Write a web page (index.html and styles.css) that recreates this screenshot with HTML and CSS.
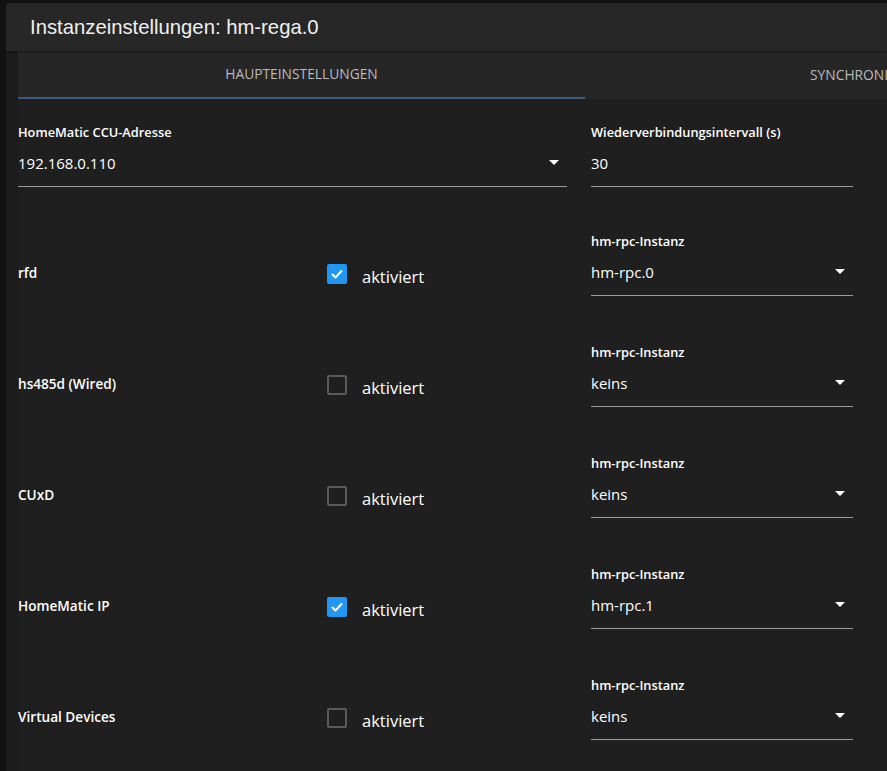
FILE: index.html
```html
<!DOCTYPE html>
<html lang="de">
<head>
<meta charset="utf-8">
<title>Instanzeinstellungen</title>
<link rel="stylesheet" href="styles.css">
</head>
<body>
<div class="dialog">
  <header class="dlg-head">Instanzeinstellungen: hm-rega.0</header>
  <div class="dlg-body">
    <nav class="tabs">
      <div class="tab active">HAUPTEINSTELLUNGEN</div>
      <div class="tab second">SYNCHRONISATION</div>
    </nav>
    <div class="content">
      <div class="row first">
        <div class="field wide">
          <div class="flabel">HomeMatic CCU-Adresse</div>
          <div class="finput"><span>192.168.0.110</span><svg class="arrow" viewBox="0 0 10 5"><path d="M0 0h10L5 5z"/></svg></div>
        </div>
        <div class="field">
          <div class="flabel">Wiederverbindungsintervall (s)</div>
          <div class="finput"><span>30</span></div>
        </div>
      </div>

      <div class="row">
        <div class="name">rfd</div>
        <label class="check"><span class="box on"><svg viewBox="0 0 20 20"><path d="M5.5 10.5l3 3L14.5 7"/></svg></span><span class="ctext">aktiviert</span></label>
        <div class="field">
          <div class="flabel">hm-rpc-Instanz</div>
          <div class="finput"><span>hm-rpc.0</span><svg class="arrow" viewBox="0 0 10 5"><path d="M0 0h10L5 5z"/></svg></div>
        </div>
      </div>

      <div class="row">
        <div class="name">hs485d (Wired)</div>
        <label class="check"><span class="box"></span><span class="ctext">aktiviert</span></label>
        <div class="field">
          <div class="flabel">hm-rpc-Instanz</div>
          <div class="finput"><span>keins</span><svg class="arrow" viewBox="0 0 10 5"><path d="M0 0h10L5 5z"/></svg></div>
        </div>
      </div>

      <div class="row">
        <div class="name">CUxD</div>
        <label class="check"><span class="box"></span><span class="ctext">aktiviert</span></label>
        <div class="field">
          <div class="flabel">hm-rpc-Instanz</div>
          <div class="finput"><span>keins</span><svg class="arrow" viewBox="0 0 10 5"><path d="M0 0h10L5 5z"/></svg></div>
        </div>
      </div>

      <div class="row">
        <div class="name">HomeMatic IP</div>
        <label class="check"><span class="box on"><svg viewBox="0 0 20 20"><path d="M5.5 10.5l3 3L14.5 7"/></svg></span><span class="ctext">aktiviert</span></label>
        <div class="field">
          <div class="flabel">hm-rpc-Instanz</div>
          <div class="finput"><span>hm-rpc.1</span><svg class="arrow" viewBox="0 0 10 5"><path d="M0 0h10L5 5z"/></svg></div>
        </div>
      </div>

      <div class="row">
        <div class="name">Virtual Devices</div>
        <label class="check"><span class="box"></span><span class="ctext">aktiviert</span></label>
        <div class="field">
          <div class="flabel">hm-rpc-Instanz</div>
          <div class="finput"><span>keins</span><svg class="arrow" viewBox="0 0 10 5"><path d="M0 0h10L5 5z"/></svg></div>
        </div>
      </div>
    </div>
  </div>
</div>
</body>
</html>
```
FILE: styles.css
```css
html, body {
  margin: 0;
  padding: 0;
  height: 100%;
  background: #121212;
  overflow: hidden;
}
body {
  padding: 3px 0 0 6px;
  box-sizing: border-box;
  font-family: "Open Sans", "Noto Sans", sans-serif;
  color: #fff;
}
.dialog {
  background: #1c1c1c;
  border-radius: 4px 0 0 0;
  height: 100%;
  overflow: hidden;
}
.dlg-head {
  height: 48px;
  background: #272727;
  font-family: "Liberation Sans", Arial, sans-serif;
  font-size: 20.3px;
  line-height: 48px;
  padding-left: 24px;
  color: #f0f0f0;
  box-shadow: 0 1px 2px rgba(0,0,0,0.35);
  position: relative;
  z-index: 1;
}
.dlg-body {
  margin-left: 12px;
  background: #1f1f1f;
  height: 100%;
}
.tabs {
  display: flex;
  height: 48px;
  background: #262626;
  white-space: nowrap;
  overflow: hidden;
}
.tab {
  flex: 0 0 567px;
  text-align: center;
  font-size: 13.8px;
  font-weight: 500;
  line-height: 48px;
  color: #bababa;
  box-sizing: border-box;
}
.tab.second {
  padding-left: 10px;
}
.tab.active {
  border-bottom: 2px solid #3a5a80;
  line-height: 46px;
}
.content {
  padding-top: 24px;
  width: 835px;
}
.row {
  display: flex;
  align-items: flex-start;
  margin-bottom: 47px;
}
.row.first {
  margin-bottom: 45px;
}
.field {
  width: 262px;
  margin-left: 24px;
}
.field.wide {
  width: 549px;
  margin-left: 0;
}
.flabel {
  height: 18px;
  line-height: 18px;
  font-size: 12.8px;
  font-weight: 600;
  color: #fff;
}
.finput {
  display: flex;
  align-items: center;
  justify-content: space-between;
  border-bottom: 1px solid #9a9a9a;
  font-size: 15px;
  padding-right: 8px;
  padding-bottom: 2px;
  height: 43px;
}
.arrow {
  width: 10px;
  height: 5px;
  fill: #fff;
}
.name {
  width: 309px;
  margin-top: 19px;
  height: 44px;
  line-height: 44px;
  font-size: 13.6px;
  font-weight: 600;
}
.check {
  width: 240px;
  margin-top: 20px;
  height: 44px;
  display: flex;
  align-items: center;
  font-size: 16.5px;
  color: #fff;
}
.ctext {
  padding-top: 4px;
}
.box {
  width: 20px;
  height: 20px;
  box-sizing: border-box;
  border: 2px solid #5a5a5a;
  border-radius: 2px;
  margin-right: 15px;
  display: inline-block;
  flex: none;
}
.box.on {
  background: #2196f3;
  border: none;
}
.box svg {
  width: 20px;
  height: 20px;
  display: block;
}
.box svg path {
  fill: none;
  stroke: #fff;
  stroke-width: 2;
  stroke-linecap: round;
  stroke-linejoin: round;
}
```
